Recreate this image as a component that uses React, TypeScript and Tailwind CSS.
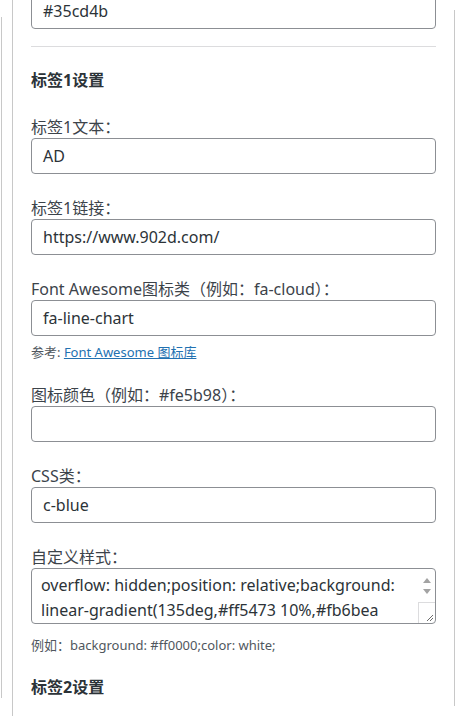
import React from "react";

const font = { fontFamily: '"Noto Sans", "Noto Sans CJK SC", sans-serif' };

function Label({ children }: { children: React.ReactNode }) {
  return <div className="text-[16px] leading-[22px] text-[#3c434a]">{children}</div>;
}

function TextInput({ value }: { value?: string }) {
  return (
    <div className="flex h-[36px] items-center rounded-[4px] border border-[#8c8f94] bg-white px-[11px] text-[16px] text-[#2c3338]">
      {value}
    </div>
  );
}

function Field({ label, value }: { label: string; value?: string }) {
  return (
    <div className="mt-[23px]">
      <Label>{label}</Label>
      <TextInput value={value} />
    </div>
  );
}

function FakeTextarea() {
  return (
    <div className="flex h-[56px] overflow-hidden rounded-[4px] border border-[#8c8f94] bg-white text-[16px] text-[#2c3338]">
      <div className="flex-1 overflow-hidden pl-[9px] pt-[4px] leading-[25px] whitespace-nowrap">
        <div>overflow: hidden;position: relative;background:</div>
        <div>linear-gradient(135deg,#ff5473 10%,#fb6bea</div>
      </div>
      {/* scrollbar + resize corner */}
      <div className="flex w-[17px] flex-col">
        <div className="flex h-[17px] items-end justify-center pb-[3px]">
          <svg width="8" height="5" viewBox="0 0 8 5"><path d="M4 0L8 5H0z" fill="#a3a3a3" /></svg>
        </div>
        <div className="flex h-[16px] items-start justify-center pt-[3px]">
          <svg width="8" height="5" viewBox="0 0 8 5"><path d="M0 0H8L4 5z" fill="#a3a3a3" /></svg>
        </div>
        <div className="relative flex-1 border-t border-l border-[#dcdcde]">
          <svg className="absolute bottom-[1px] right-[1px]" width="9" height="9" viewBox="0 0 9 9">
            <path d="M8 2L2 8M8 5L5 8" stroke="#6b6b6b" strokeWidth="1" />
          </svg>
        </div>
      </div>
    </div>
  );
}

export default function App() {
  return (
    <div className="flex h-[716px] overflow-hidden bg-white" style={font}>
      <div className="ml-px mt-[17px] h-[681px] w-px shrink-0 bg-[#c8c8c8]" />
      <div className="ml-[10px] w-px shrink-0 bg-[#c8c8c8]" />
      <div className="ml-[18px] w-[405px] shrink-0">
        <div className="-mt-[7px]">
          <TextInput value="#35cd4b" />
        </div>
        <div className="mt-[17px] h-px bg-[#dcdcde]" />

        <h3 className="mt-[21px] text-[16px] font-bold leading-[24px] text-[#2c3338]">标签1设置</h3>

        <div className="pt-px">
          <Field label="标签1文本：" value="AD" />
        </div>
        <Field label="标签1链接：" value="https://www.902d.com/" />
        <Field label="Font Awesome图标类（例如：fa-cloud）：" value="fa-line-chart" />
        <p className="mt-[7px] text-[13px] leading-[18px] text-[#50575e]">
          参考: <a className="text-[#2271b1] underline" href="#">Font Awesome 图标库</a>
        </p>
        <Field label="图标颜色（例如：#fe5b98）：" />
        <Field label="CSS类：" value="c-blue" />
        <div className="mt-[23px]">
          <Label>自定义样式：</Label>
          <FakeTextarea />
        </div>
        <p className="mt-[12px] text-[13px] leading-[18px] text-[#50575e]">例如：background: #ff0000;color: white;</p>

        <h3 className="mt-[21px] text-[16px] font-bold leading-[24px] text-[#2c3338]">标签2设置</h3>
      </div>
      <div className="ml-[18px] mt-[10px] h-[696px] w-px shrink-0 bg-[#c8c8c8]" />
    </div>
  );
}
